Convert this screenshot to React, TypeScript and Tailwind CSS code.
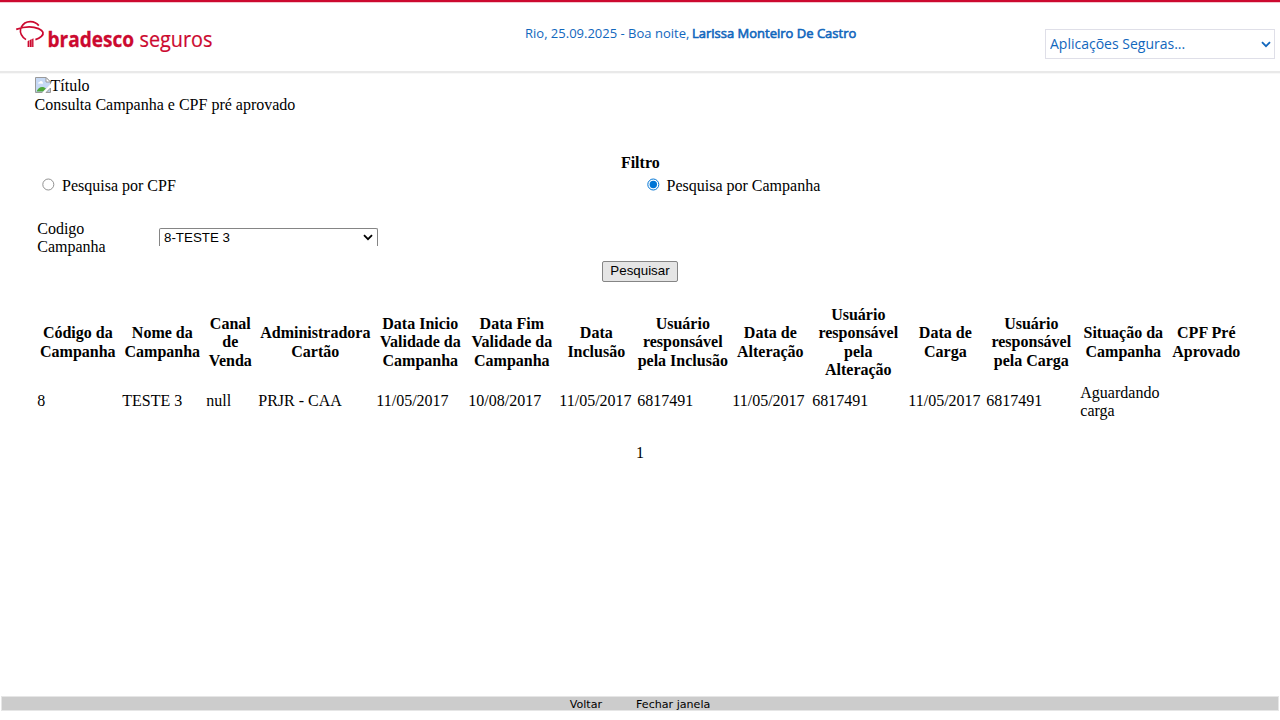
import React, { useState } from "react";

interface Column {
  lines: string[];
  value: string;
  width: string;
}

const columns: Column[] = [
  { lines: ["Código da", "Campanha"], value: "8", width: "w-[85px]" },
  { lines: ["Nome da", "Campanha"], value: "TESTE 3", width: "w-[84px]" },
  { lines: ["Canal", "de", "Venda"], value: "null", width: "w-[52px]" },
  { lines: ["Administradora", "Cartão"], value: "PRJR - CAA", width: "w-[118px]" },
  { lines: ["Data Inicio", "Validade da", "Campanha"], value: "11/05/2017", width: "w-[92px]" },
  { lines: ["Data Fim", "Validade da", "Campanha"], value: "10/08/2017", width: "w-[91px]" },
  { lines: ["Data", "Inclusão"], value: "11/05/2017", width: "w-[78px]" },
  { lines: ["Usuário", "responsável", "pela Inclusão"], value: "6817491", width: "w-[95px]" },
  { lines: ["Data de", "Alteração"], value: "11/05/2017", width: "w-[80px]" },
  { lines: ["Usuário", "responsável", "pela", "Alteração"], value: "6817491", width: "w-[96px]" },
  { lines: ["Data de", "Carga"], value: "11/05/2017", width: "w-[78px]" },
  { lines: ["Usuário", "responsável", "pela Carga"], value: "6817491", width: "w-[94px]" },
  { lines: ["Situação da", "Campanha"], value: "Aguardando carga", width: "w-[90px]" },
  { lines: ["CPF Pré", "Aprovado"], value: "", width: "w-[76px]" },
];

function Logo() {
  return (
    <svg width="220" height="44" viewBox="0 0 220 44" className="block shrink-0 overflow-visible" aria-label="bradesco seguros">
      <g fill="none" stroke="#cc092f">
        <path d="M5.2 10.4C7.5 6 11 4.6 14.5 4.7C18.2 4.8 21 6.4 22.8 8.6" strokeWidth="1.8" />
        <path d="M0.2 12.4C8 9.6 17 9.4 22.5 11.6C27.6 13.7 28.2 16.8 25.4 19.4C24 20.7 22 21.9 19.4 22.7" strokeWidth="1.8" />
        <path d="M4.6 11.4C3.8 15.6 5.6 19.8 10 22.6" strokeWidth="1.6" />
      </g>
      <path d="M11.6 24.3l1.8-1.2V30h-1.8zM13.9 23l1.8-.9V30h-1.8zM16.1 22l1.4-.7V30h-1.4z" fill="#cc092f" />
      <text x="31.5" y="30" fill="#cc092f" stroke="#cc092f" strokeWidth="0.3" fontSize="22" fontWeight="700" textLength="86.5" lengthAdjust="spacingAndGlyphs" fontFamily="'Open Sans', sans-serif">
        bradesco
      </text>
      <text x="123.5" y="30" fill="#cc092f" stroke="#cc092f" strokeWidth="0.2" fontSize="21.5" textLength="73" lengthAdjust="spacingAndGlyphs" fontFamily="'Open Sans', sans-serif">
        seguros
      </text>
    </svg>
  );
}

function Chevron({ color }: { color: string }) {
  return (
    <svg width="10" height="7" viewBox="0 0 10 7" className="pointer-events-none">
      <path d="M1 1.2L5 5.2L9 1.2" fill="none" stroke={color} strokeWidth="1.8" />
    </svg>
  );
}

function BrokenImage() {
  return (
    <svg width="16" height="16" viewBox="0 0 16 16" className="shrink-0">
      <path d="M.5.5H11L15.5 5V8L8 15.5H.5z" fill="#c6d9f5" stroke="#9a9a9a" />
      <path d="M3 6.5a1.5 1.5 0 0 1 1.5-1.6a1.8 1.8 0 0 1 3.3.6a1 1 0 0 1 0 1.2z" fill="#fff" />
      <path d="M1.5 14.5C3 11 6 9 9.3 10.5L11 11.5L8 14.5z" fill="#4fa83a" />
      <path d="M11 .5V5h4.5z" fill="#fff" stroke="#9a9a9a" />
      <path d="M16 6.5V9L9.5 16H7z" fill="#fff" />
      <path d="M15.5 11V15.5H11z" fill="#b7c9e4" stroke="#9a9a9a" />
    </svg>
  );
}

function Radio({ checked, label, onSelect }: { checked: boolean; label: string; onSelect: () => void }) {
  return (
    <label className="flex h-[18px] items-start">
      <input type="radio" name="filtro" className="sr-only" checked={checked} onChange={onSelect} />
      <svg width="13" height="13" viewBox="0 0 13 13" className="mt-[1px] mr-[7px]">
        <circle cx="6.3" cy="6.5" r="5.5" fill="#fff" stroke={checked ? "#0075d5" : "#767676"} strokeWidth={checked ? 1 : 0.8} />
        {checked && <circle cx="6.3" cy="6.5" r="3.7" fill="#0075d5" />}
      </svg>
      <span>{label}</span>
    </label>
  );
}

export default function App() {
  const [mode, setMode] = useState("campanha");
  return (
    <div className="flex h-[720px] w-[1280px] flex-col overflow-hidden bg-white font-['Liberation_Serif',serif] text-[16px] leading-[18px] text-black">
      <header className="flex h-[71px] shrink-0 border-t-2 border-[#cc092f] pr-[5px] pl-4 font-['Open_Sans',sans-serif] text-[#1267bd] shadow-[inset_0_1px_0_#f3c6cf,0_2px_0_#e9e9e9,0_3px_0_#f8f8f8]">
        <div className="w-[509px] shrink-0 pt-[15px]">
          <Logo />
        </div>
        <p className="w-[520px] pt-[22px] text-[13px] leading-[18px] whitespace-nowrap">
          Rio, 25.09.2025 - Boa noite, <b className="-ml-[0.7px] font-normal [-webkit-text-stroke:0.6px_#1267bd]">Larissa Monteiro De Castro</b>
        </p>
        <div className="mt-[27px] grid h-[30px] w-[230px] items-center border border-[#dfdfe8]">
          <select className="h-full w-full appearance-none bg-transparent pl-1 text-[14px] [grid-area:1/1]">
            <option>Aplicações Seguras...</option>
          </select>
          <div className="mr-[3px] justify-self-end [grid-area:1/1]">
            <Chevron color="#1267bd" />
          </div>
        </div>
      </header>

      <main className="flex-1 px-[34.5px] pt-[6px]">
        <div className="flex h-[19px]">
          <BrokenImage />
          <span>Título</span>
        </div>
        <h1>Consulta Campanha e CPF pré aprovado</h1>

        <h2 className="mt-10 pl-[0.6px] text-center font-bold">Filtro</h2>
        <div className="mt-[5px] flex pl-[7.5px]">
          <div className="w-[604.5px]">
            <Radio checked={mode === "cpf"} label="Pesquisa por CPF" onSelect={() => setMode("cpf")} />
          </div>
          <Radio checked={mode === "campanha"} label="Pesquisa por Campanha" onSelect={() => setMode("campanha")} />
        </div>

        <div className="mt-[25px] flex pl-[2.75px]">
          <div className="w-[121.75px]">
            Codigo
            <br />
            Campanha
          </div>
          <div className="mt-[8px] grid h-[18px] w-[219px] items-center rounded-t-[2px] border border-b-0 border-[#858585]">
            <select className="h-[17px] w-full appearance-none bg-transparent pl-1 font-['Liberation_Sans',sans-serif] text-[13.33px] leading-[17px] [grid-area:1/1]">
              <option>8-TESTE 3</option>
            </select>
            <div className="mr-[4px] flex justify-self-end [grid-area:1/1]">
              <Chevron color="#000" />
            </div>
          </div>
        </div>

        <div className="mt-[5px] flex justify-center">
          <button className="h-[21px] w-[76px] rounded-[2px] border border-[#858585] bg-[#e5e5e5] pb-[2px] font-['Liberation_Sans',sans-serif] text-[13.33px] leading-[17px]">
            Pesquisar
          </button>
        </div>

        <table className="mt-[23px] ml-[2.8px] w-[1209px] table-fixed border-collapse">
          <thead>
            <tr className="h-[75px] leading-[18.4px]">
              {columns.map((c, i) => (
                <th key={i} className={`${c.width} p-0 pr-1 text-center align-middle font-bold whitespace-nowrap`}>
                  {c.lines.map((l) => (
                    <div key={l}>{l}</div>
                  ))}
                </th>
              ))}
            </tr>
          </thead>
          <tbody>
            <tr className="h-[42px]">
              {columns.map((c, i) => (
                <td key={i} className={c.value.length > 12 ? "pt-[2px] align-middle" : "p-0 align-middle"}>
                  {c.value}
                </td>
              ))}
            </tr>
          </tbody>
        </table>

        <nav className="mt-[22px] text-center">1</nav>
      </main>

      <footer className="mx-[1px] mb-[9px] flex h-[15px] shrink-0 justify-center gap-[34px] border border-[#e6e6e6] bg-[#cccccc] font-['DejaVu_Sans',sans-serif] text-[11.1px] leading-[15px]">
        <a>Voltar</a>
        <a>Fechar janela</a>
      </footer>
    </div>
  );
}
